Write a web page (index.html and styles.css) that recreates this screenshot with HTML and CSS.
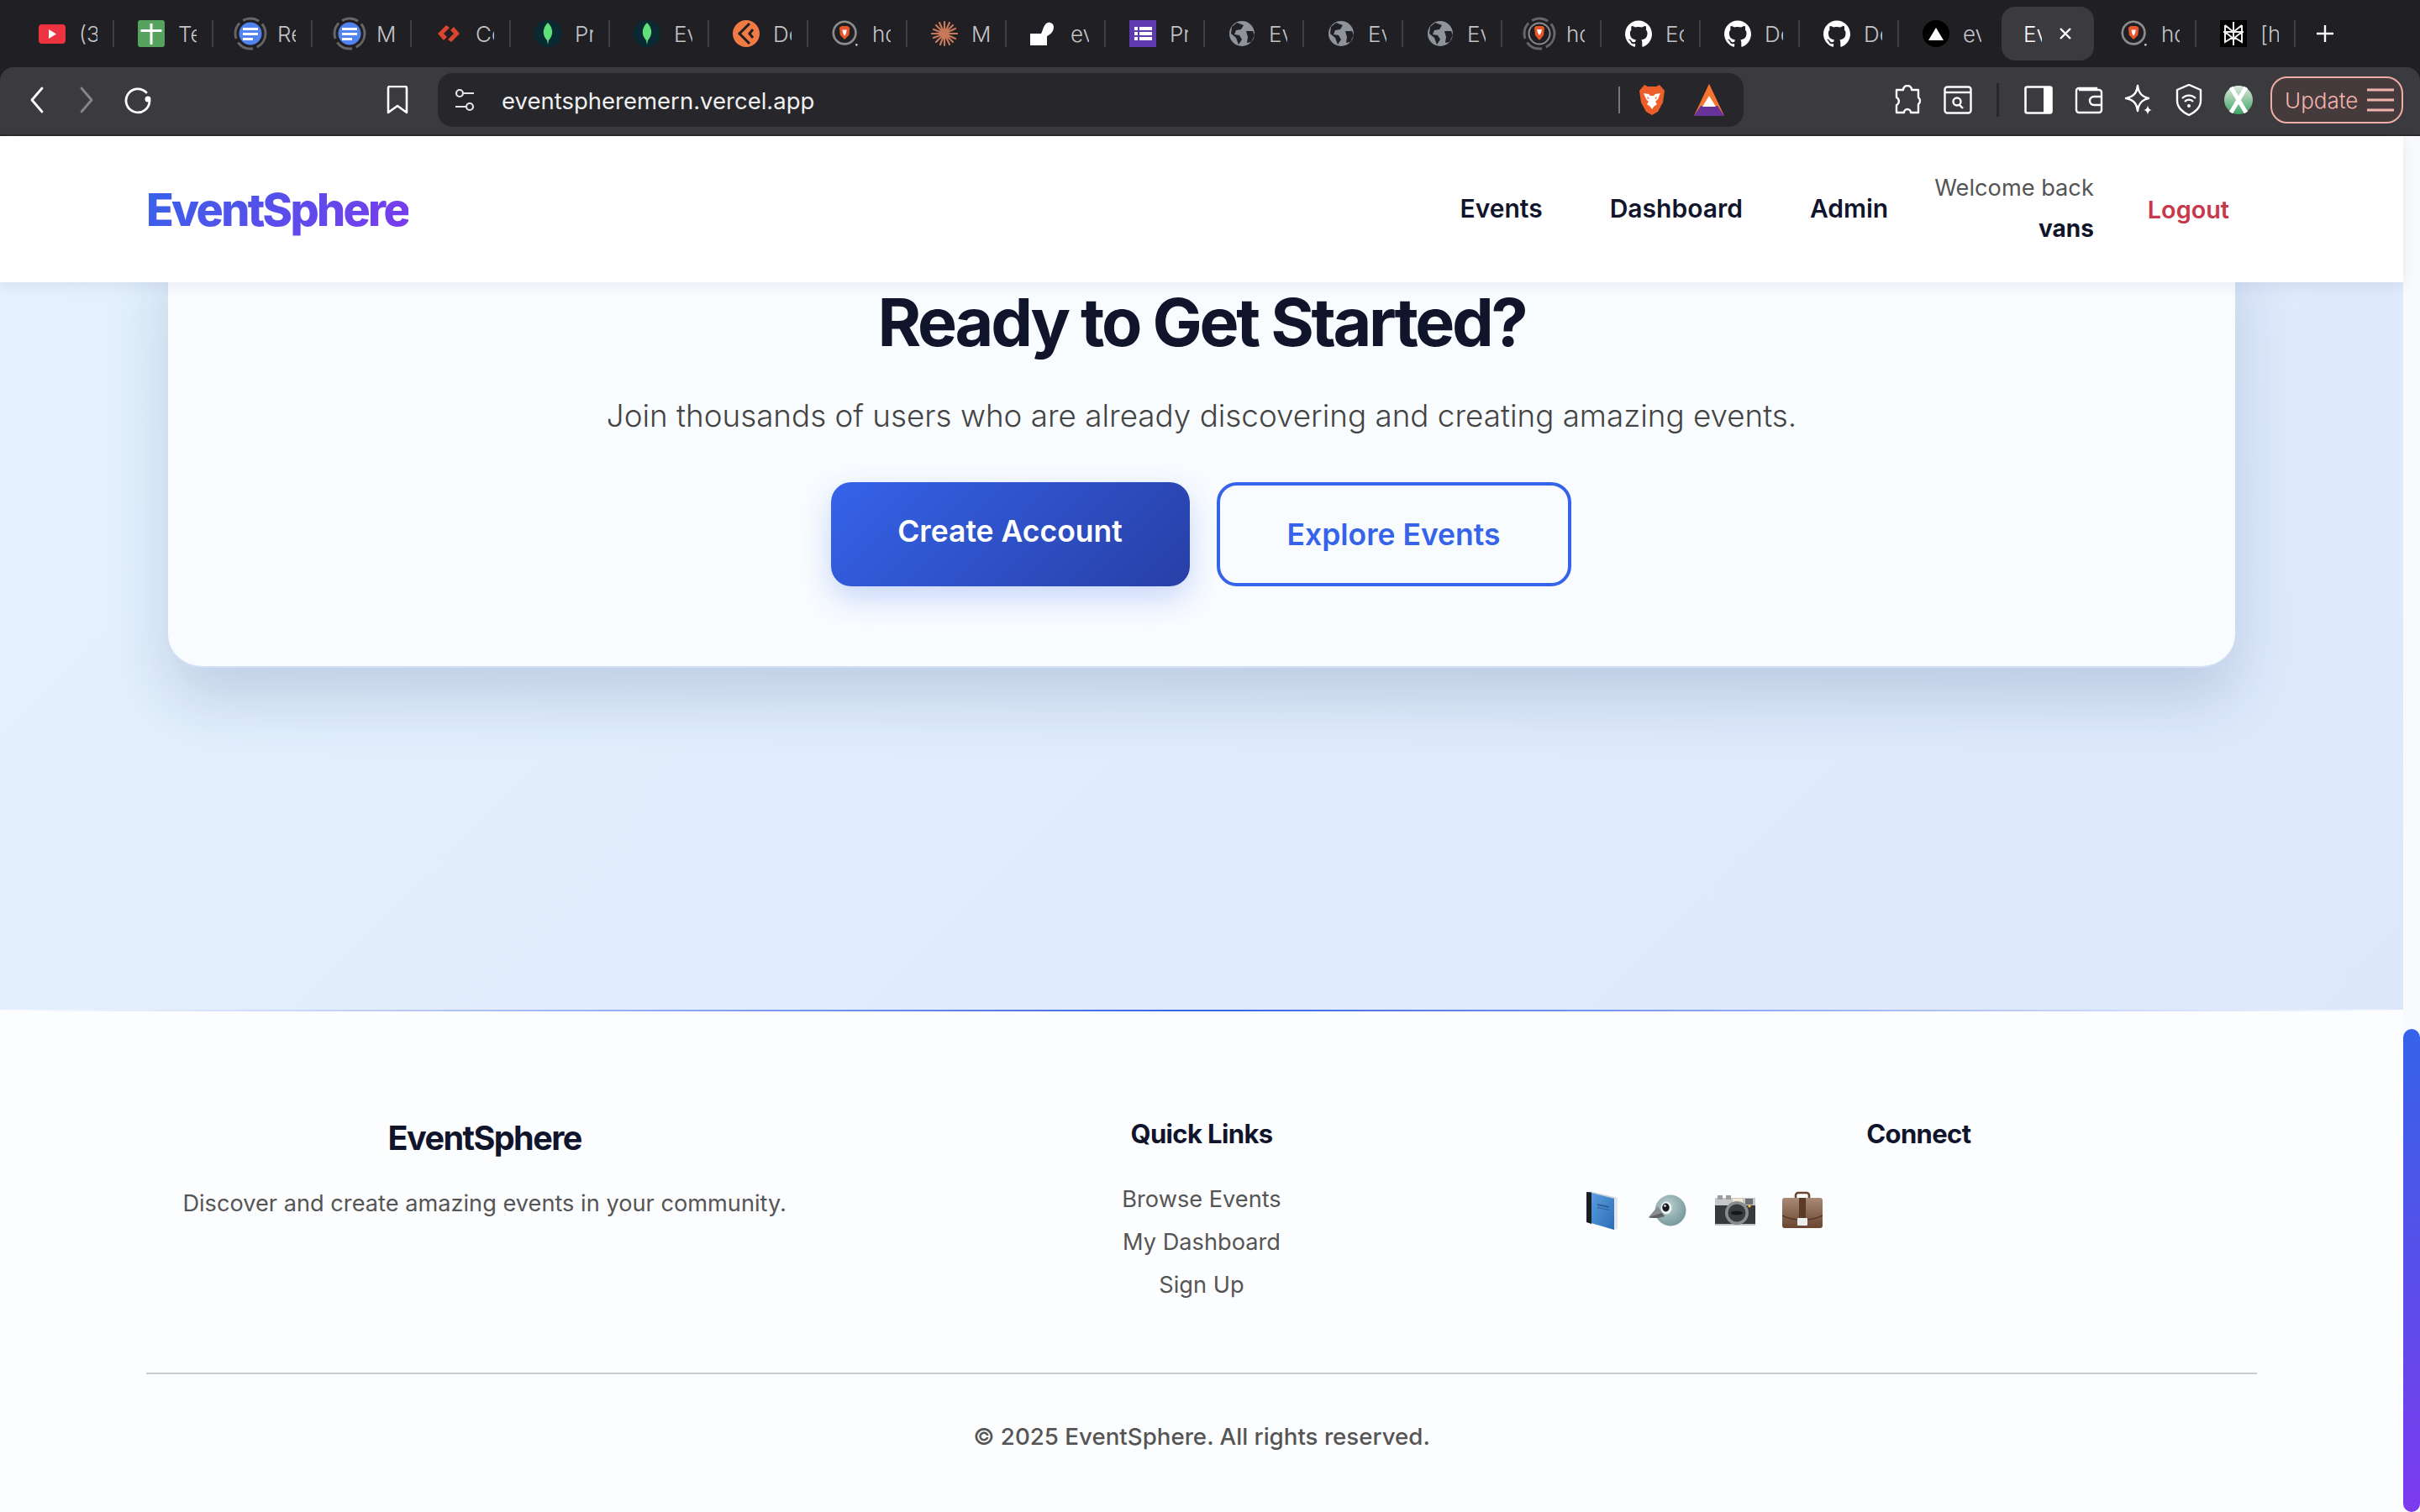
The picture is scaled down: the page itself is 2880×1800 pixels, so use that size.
FILE: index.html
```html
<!DOCTYPE html>
<html lang="en">
<head>
    <meta charset="UTF-8">
    <meta name="viewport" content="width=device-width, initial-scale=1.0">
    <title>EventSphere</title>
    <link rel="stylesheet" href="styles.css">
</head>
<body>
    <svg class="defs" width="0" height="0">
        <defs>
            <symbol id="i-yt" viewBox="0 0 32 32"><rect y="5" width="32" height="23" rx="4" fill="#ee3340"/><path d="M12 11l9 5.500-9 5.500z" fill="#fff"/></symbol>
            <symbol id="i-sheet" viewBox="0 0 32 32"><rect width="32" height="32" rx="3" fill="#55a35f"/><path d="M14.500 4h3v7h11v3h-11v15h-3V14h-11v-3h11z" fill="#fff"/></symbol>
            <symbol id="i-docs" viewBox="0 0 40 40"><circle cx="20" cy="20" r="18" fill="none" stroke="#666" stroke-width="3" stroke-dasharray="20 5"/><circle cx="20" cy="20" r="13.500" fill="#5184ee"/><path d="M11 13h18v3H11zM11 19h18v3H11zM11 25h12v3H11z" fill="#fff"/></symbol>
            <symbol id="i-code" viewBox="0 0 32 32"><path d="M13 6L3 16l7 8 4-4-4-4 7-7zM19 26l10-10-7-8-4 4 4 4-7 7z" fill="#d9452f"/></symbol>
            <symbol id="i-mongo" viewBox="0 0 32 32"><circle cx="16" cy="16" r="16" fill="#0a2a33"/><path d="M16 3c6 6 7.500 14 1 21l-1 5-1-5C8.500 17 10 9 16 3z" fill="#5fe07a"/></symbol>
            <symbol id="i-dz" viewBox="0 0 32 32"><circle cx="16" cy="16" r="16" fill="#f27a45"/><path d="M20 4L8 16l12 12" fill="none" stroke="#1f1f24" stroke-width="3"/><path d="M24 11l-4 5 4 5" fill="none" stroke="#1f1f24" stroke-width="3"/></symbol>
            <symbol id="i-brave" viewBox="0 0 36 36"><circle cx="17" cy="17" r="15" fill="none" stroke="#8c8c8c" stroke-width="3"/><path d="M10 10l3-2h8l3 2-1 10-6 6-6-6z" fill="#e8562a"/><path d="M14 13h6l-1 5-2 3-2-3z" fill="#fff"/><circle cx="33" cy="33" r="1.500" fill="#ccc"/></symbol>
            <symbol id="i-brave-ring" viewBox="0 0 40 40"><circle cx="20" cy="20" r="18" fill="none" stroke="#666" stroke-width="3" stroke-dasharray="20 5"/><circle cx="20" cy="20" r="12.500" fill="none" stroke="#8c8c8c" stroke-width="2"/><path d="M14 13l2-2h8l2 2-1 9-5 6-5-6z" fill="#e8562a"/><path d="M17 15h6l-1 4-2 3-2-3z" fill="#fff"/></symbol>
            <symbol id="i-claude" viewBox="0 0 32 32"><g stroke="#c9795a" stroke-width="2.200" stroke-linecap="round"><path d="M16 16V2M16 16V30M16 16H1M16 16H31M16 16L6 6M16 16L26 6M16 16L6 26M16 16L26 26M16 16L10 3M16 16L22 3M16 16L3 21M16 16L29 10M16 16L11 29M16 16L22 29M16 16L3 11M16 16L29 22"/></g></symbol>
            <symbol id="i-figma" viewBox="0 0 32 32"><path d="M0 16h13c2-3 2-8 6-12 4-3 9 0 9 4 0 6-4 9-8 11v11H0z" fill="#fff"/></symbol>
            <symbol id="i-forms" viewBox="0 0 32 32"><rect width="32" height="32" fill="#5f3bb0"/><path d="M6 8h4v4H6zM12 8h15v4H12zM6 14h4v4H6zM12 14h15v4H12zM6 20h4v4H6zM12 20h15v4H12z" fill="#fff"/></symbol>
            <symbol id="i-globe" viewBox="0 0 32 32"><circle cx="16" cy="16" r="15" fill="#8e9499"/><path d="M10 3l8 3-3 5-6 1-2 5 6 1 3 5-4 6-3-8-6-5 1-8zM21 13l8 0 2 5-4 8-5 1 1-7z" fill="#1f1f24"/></symbol>
            <symbol id="i-gh" viewBox="0 0 32 32"><path d="M16 .500C7.200.500 0 7.700 0 16.500c0 7 4.600 13 11 15.200.8.100 1.100-.3 1.100-.8v-2.800c-4.500 1-5.400-2.100-5.400-2.100-.7-1.800-1.800-2.300-1.800-2.300-1.400-1 .1-1 .1-1 1.600.1 2.500 1.700 2.500 1.700 1.400 2.500 3.800 1.800 4.700 1.300.1-1 .6-1.800 1-2.200-3.600-.4-7.300-1.800-7.300-7.900 0-1.800.6-3.200 1.700-4.300-.2-.4-.7-2 .2-4.300 0 0 1.300-.4 4.400 1.600 1.300-.4 2.700-.5 4-.5s2.700.2 4 .5c3.100-2.100 4.400-1.600 4.400-1.600.9 2.200.3 3.900.2 4.300 1 1.100 1.700 2.500 1.700 4.300 0 6.100-3.700 7.500-7.300 7.900.6.500 1.100 1.500 1.100 3v4.400c0 .4.300.9 1.100.8C27.400 29.500 32 23.500 32 16.500 32 7.700 24.800.500 16 .500z" fill="#fff"/></symbol>
            <symbol id="i-vercel" viewBox="0 0 32 32"><circle cx="16" cy="16" r="16" fill="#000"/><path d="M16 9l9 15H7z" fill="#fff"/></symbol>
            <symbol id="i-pplx" viewBox="0 0 32 32"><rect width="32" height="32" fill="#000"/><path d="M16 2v28M6 6l10 8 10-8M6 6v8h20V6M4 14h24M6 14l10 8 10-8M6 14v12l10-6 10 6V14" fill="none" stroke="#eee" stroke-width="2"/></symbol>
        </defs>
    </svg>

    <div class="tabstrip">
        <div class="tab"><svg class="favicon"><use href="#i-yt"/></svg><span class="tab-title">(3</span></div>
        <div class="tab"><svg class="favicon"><use href="#i-sheet"/></svg><span class="tab-title">Te</span></div>
        <div class="tab"><svg class="favicon ring"><use href="#i-docs"/></svg><span class="tab-title">Re</span></div>
        <div class="tab"><svg class="favicon ring"><use href="#i-docs"/></svg><span class="tab-title">M</span></div>
        <div class="tab"><svg class="favicon"><use href="#i-code"/></svg><span class="tab-title">Cc</span></div>
        <div class="tab"><svg class="favicon"><use href="#i-mongo"/></svg><span class="tab-title">Pr</span></div>
        <div class="tab"><svg class="favicon"><use href="#i-mongo"/></svg><span class="tab-title">Ev</span></div>
        <div class="tab"><svg class="favicon"><use href="#i-dz"/></svg><span class="tab-title">De</span></div>
        <div class="tab"><svg class="favicon"><use href="#i-brave"/></svg><span class="tab-title">ho</span></div>
        <div class="tab"><svg class="favicon"><use href="#i-claude"/></svg><span class="tab-title">M</span></div>
        <div class="tab"><svg class="favicon"><use href="#i-figma"/></svg><span class="tab-title">ev</span></div>
        <div class="tab"><svg class="favicon"><use href="#i-forms"/></svg><span class="tab-title">Pr</span></div>
        <div class="tab"><svg class="favicon"><use href="#i-globe"/></svg><span class="tab-title">Ev</span></div>
        <div class="tab"><svg class="favicon"><use href="#i-globe"/></svg><span class="tab-title">Ev</span></div>
        <div class="tab"><svg class="favicon"><use href="#i-globe"/></svg><span class="tab-title">Ev</span></div>
        <div class="tab"><svg class="favicon ring"><use href="#i-brave-ring"/></svg><span class="tab-title">ho</span></div>
        <div class="tab"><svg class="favicon"><use href="#i-gh"/></svg><span class="tab-title">Ec</span></div>
        <div class="tab"><svg class="favicon"><use href="#i-gh"/></svg><span class="tab-title">De</span></div>
        <div class="tab"><svg class="favicon"><use href="#i-gh"/></svg><span class="tab-title">De</span></div>
        <div class="tab no-sep"><svg class="favicon"><use href="#i-vercel"/></svg><span class="tab-title">ev</span></div>
        <div class="tab active"><span class="tab-title">Ev</span><svg class="tab-close" viewBox="0 0 16 16"><path d="M2 2l12 12M14 2L2 14" stroke="#fff" stroke-width="2.400" fill="none"/></svg></div>
        <div class="tab"><svg class="favicon"><use href="#i-brave"/></svg><span class="tab-title">ho</span></div>
        <div class="tab"><svg class="favicon"><use href="#i-pplx"/></svg><span class="tab-title">[h</span></div>
        <svg class="new-tab" viewBox="0 0 22 22"><path d="M11 1v20M1 11h20" stroke="#fff" stroke-width="2.400"/></svg>
    </div>

    <div class="toolbar">
        <svg class="tool-icon nav-arrow" viewBox="0 0 18 32"><path d="M15 2L3 16l12 14" fill="none" stroke="#fff" stroke-width="2.800" stroke-linecap="round" stroke-linejoin="round"/></svg>
        <svg class="tool-icon nav-arrow forward" viewBox="0 0 18 32"><path d="M3 2l12 14L3 30" fill="none" stroke="#85858a" stroke-width="2.800" stroke-linecap="round" stroke-linejoin="round"/></svg>
        <svg class="tool-icon reload" viewBox="0 0 34 34"><path d="M27 8a14 14 0 1 0 4 10" fill="none" stroke="#fff" stroke-width="2.800" stroke-linecap="round"/><circle cx="29" cy="16" r="3.500" fill="#fff"/></svg>
        <svg class="tool-icon bookmark" viewBox="0 0 26 34"><path d="M2 3a2 2 0 0 1 2-2h18a2 2 0 0 1 2 2v29l-11-8-11 8z" fill="none" stroke="#fff" stroke-width="2.600" stroke-linejoin="round"/></svg>
        <div class="urlbar">
            <svg class="tune" viewBox="0 0 24 32"><circle cx="6" cy="8" r="4" fill="none" stroke="#e4e4e4" stroke-width="2.200"/><path d="M11 8h12M1 24h12" stroke="#e4e4e4" stroke-width="2.200"/><circle cx="18" cy="24" r="4" fill="none" stroke="#e4e4e4" stroke-width="2.200"/></svg>
            <span class="url-text">eventspheremern.vercel.app</span>
            <span class="url-divider"></span>
            <svg class="url-brave" viewBox="0 0 32 38"><path d="M7 1l4 2h10l4-2 6 7-2 14-6 11-7 4-7-4-6-11L1 8z" fill="#ed5f2a"/><path d="M6 11l6 1 2 2h4l2-2 6-1-3 7-3 3 2 3-4 3-2 3-2-3-4-3 2-3-3-3z" fill="#fff"/><path d="M10 15l3 2-2 1zM22 15l-3 2 2 1z" fill="#ed5f2a"/></svg>
            <svg class="url-bat" viewBox="0 0 36 38"><path d="M18 0l18 38H0z" fill="#e3393c"/><path d="M18 0L0 38l10-6h16l10 6z" fill="#f2762e"/><path d="M0 38l8-12h20l8 12z" fill="#66339a"/><path d="M18 14l8 13H10z" fill="#fff"/></svg>
        </div>
        <svg class="tool-icon puzzle" viewBox="0 0 34 36"><path d="M12 6a5 5 0 0 1 10 0h8v9a5 5 0 0 1 0 8v10h-9a4 4 0 0 0-8 0H4v-9a5 5 0 0 0 0-9V6z" fill="none" stroke="#fff" stroke-width="2.400" stroke-linejoin="round"/></svg>
        <svg class="tool-icon shot" viewBox="0 0 34 34"><rect x="1.500" y="1.500" width="31" height="31" rx="3" fill="none" stroke="#fff" stroke-width="2.400"/><path d="M2 8h30" stroke="#fff" stroke-width="2.400"/><circle cx="16" cy="19" r="4.500" fill="none" stroke="#fff" stroke-width="2.400"/><path d="M19 23l4 4" stroke="#fff" stroke-width="2.400"/></svg>
        <span class="tool-divider"></span>
        <svg class="tool-icon sidebar" viewBox="0 0 34 34"><rect x="1.500" y="1.500" width="31" height="31" rx="2" fill="none" stroke="#fff" stroke-width="2.600"/><rect x="23" y="2" width="10" height="30" fill="#fff"/></svg>
        <svg class="tool-icon wallet" viewBox="0 0 34 34"><path d="M26 5V3H5a3 3 0 0 0-3 3v23a3 3 0 0 0 3 3h24a3 3 0 0 0 3-3V8a3 3 0 0 0-3-3H5" fill="none" stroke="#fff" stroke-width="2.400"/><path d="M32 13H23a4 4 0 0 0 0 10h9" fill="none" stroke="#fff" stroke-width="2.400"/></svg>
        <svg class="tool-icon sparkle" viewBox="0 0 36 38"><path d="M17 2c1 9 5 13 13 15-8 2-12 6-13 15-1-9-5-13-14-15 9-2 13-6 14-15z" fill="none" stroke="#fff" stroke-width="2.400" stroke-linejoin="round"/><path d="M29 25c.5 4 2 5.500 5 6-3 .5-4.500 2-5 6-.5-4-2-5.500-5-6 3-.5 4.500-2 5-6z" fill="#fff"/></svg>
        <svg class="tool-icon vpn" viewBox="0 0 32 38"><path d="M16 1l14 6v13c0 8-7 14-14 17C9 34 2 28 2 20V7z" fill="none" stroke="#fff" stroke-width="2.400" stroke-linejoin="round"/><path d="M8 17a11 11 0 0 1 16 0M11 21a6.500 6.500 0 0 1 10 0" fill="none" stroke="#fff" stroke-width="2.200"/><circle cx="16" cy="26" r="2" fill="#fff"/></svg>
        <svg class="tool-icon profile" viewBox="0 0 34 34"><defs><linearGradient id="g-profile" x1="0" y1="0" x2="0" y2="1"><stop offset="0" stop-color="#dfe9df"/><stop offset="1" stop-color="#3fa564"/></linearGradient></defs><circle cx="17" cy="17" r="17" fill="url(#g-profile)"/><path d="M8 2l18 30M26 2L8 32" stroke="#fff" stroke-width="5"/></svg>
        <div class="update-btn">
            <span>Update</span>
            <svg class="update-menu" viewBox="0 0 34 30"><path d="M1 3h32M1 15h32M1 27h32" stroke="#f2b3ad" stroke-width="3"/></svg>
        </div>
    </div>

    <div class="viewport">
        <div class="page">
            <header class="site-nav">
                <div class="logo">EventSphere</div>
                <nav class="nav-links">
                    <a class="nav-link">Events</a>
                    <a class="nav-link">Dashboard</a>
                    <a class="nav-link">Admin</a>
                    <div class="user-box">
                        <span class="welcome">Welcome back</span>
                        <strong class="username">vans</strong>
                    </div>
                    <a class="logout">Logout</a>
                </nav>
            </header>

            <main class="main">
                <section class="cta-card">
                    <h2 class="cta-title">Ready to Get Started?</h2>
                    <p class="cta-text">Join thousands of users who are already discovering and creating amazing events.</p>
                    <div class="cta-buttons">
                        <a class="btn btn-primary"><span class="btn-lift">Create Account</span></a>
                        <a class="btn btn-outline">Explore Events</a>
                    </div>
                </section>
            </main>

            <footer class="footer">
                <div class="footer-grid">
                    <div class="footer-col">
                        <h3 class="footer-brand">EventSphere</h3>
                        <p class="footer-text">Discover and create amazing events in your community.</p>
                    </div>
                    <div class="footer-col">
                        <h4 class="footer-heading">Quick Links</h4>
                        <ul class="footer-list">
                            <li>Browse Events</li>
                            <li>My Dashboard</li>
                            <li>Sign Up</li>
                        </ul>
                    </div>
                    <div class="footer-col">
                        <h4 class="footer-heading">Connect</h4>
                        <div class="social">
                            <svg class="social-icon" viewBox="0 0 48 48"><defs><linearGradient id="g-book" x1="0" y1="0" x2="1" y2="1"><stop offset="0" stop-color="#5a9ee0"/><stop offset="1" stop-color="#2a6db5"/></linearGradient></defs><path d="M7 2l5-.5L44 9v36l-4 2-33-9z" fill="#ccd3da"/><path d="M7 2l6 .5V40l-6-2z" fill="#1a1d24"/><path d="M13 3l27 7v37L13 39z" fill="url(#g-book)"/><path d="M40 10l4-1v36l-4 2z" fill="#e3e6ea"/><path d="M20 16l14 3v2l-14-3zM20 20l14 3v1l-14-3z" fill="#2b5e96"/></svg>
                            <svg class="social-icon" viewBox="0 0 48 48"><defs><radialGradient id="g-bird" cx=".4" cy=".35" r=".75"><stop offset="0" stop-color="#bcd0d0"/><stop offset="1" stop-color="#6f9296"/></radialGradient></defs><circle cx="27" cy="24" r="18.500" fill="url(#g-bird)"/><path d="M12 19L1 32c5 2 13 1 19-1z" fill="#8a8d90"/><path d="M1 32c5 2 13 1 19-1l-3-4z" fill="#5e6164"/><ellipse cx="22" cy="21" rx="6.500" ry="7.500" fill="#eef3f3"/><ellipse cx="21.500" cy="20.500" rx="4.200" ry="5" fill="#16191c"/><circle cx="20.500" cy="18.500" r="1.300" fill="#fff"/></svg>
                            <svg class="social-icon" viewBox="0 0 48 48"><rect x="0" y="9" width="48" height="33" fill="#c4c6c8"/><rect x="0" y="18" width="48" height="22" fill="#38393c"/><rect x="3" y="6" width="6" height="5" fill="#9a9c9f"/><rect x="13" y="6" width="6" height="5" fill="#9a9c9f"/><rect x="21" y="10" width="12" height="5" fill="#f2ead0"/><rect x="36" y="10" width="9" height="7" fill="#6d6f72"/><circle cx="26" cy="27" r="14" fill="#8a8c8f"/><circle cx="26" cy="27" r="10.500" fill="#3a3b3e"/><ellipse cx="26" cy="27" rx="7" ry="2.500" fill="#16171a"/><circle cx="41" cy="19" r="1.600" fill="#f4c430"/></svg>
                            <svg class="social-icon" viewBox="0 0 48 48"><defs><linearGradient id="g-case" x1="0" y1="0" x2="0" y2="1"><stop offset="0" stop-color="#a88a76"/><stop offset="1" stop-color="#6a4530"/></linearGradient></defs><path d="M16 10V6a3 3 0 0 1 3-3h10a3 3 0 0 1 3 3v4" fill="none" stroke="#6a4530" stroke-width="2.600"/><rect x="0" y="9" width="48" height="36" rx="3" fill="url(#g-case)"/><rect x="20" y="9" width="8" height="25" fill="#5a3a28"/><path d="M0 30c14 7 34 7 48 0" fill="none" stroke="#4e3122" stroke-width="1.200"/><rect x="18" y="33" width="12" height="9" rx="1" fill="#eceeee"/></svg>
                        </div>
                    </div>
                </div>
                <div class="footer-bottom">© 2025 EventSphere. All rights reserved.</div>
            </footer>
        </div>
        <div class="scroll-track"><div class="scroll-thumb"></div></div>
    </div>
</body>
</html>
```

FILE: styles.css
```css
* {
    box-sizing: border-box;
}

body {
    margin: 0;
    height: 1800px;
    overflow: hidden;
    display: flex;
    flex-direction: column;
    background-color: #1f1f24;
    font-family: Inter, "Noto Sans", sans-serif;
}

.defs {
    position: absolute;
}

/* browser tabs */
.tabstrip {
    height: 80px;
    padding-left: 18px;
    display: flex;
    align-items: center;
    flex-shrink: 0;
}

.tab {
    width: 118px;
    height: 32px;
    padding-left: 28px;
    display: flex;
    align-items: center;
    border-right: 2px solid #3e3e43;
    flex-shrink: 0;
}

.tab.no-sep {
    border-right-color: transparent;
}

.favicon {
    width: 32px;
    height: 32px;
    flex-shrink: 0;
}

.favicon.ring {
    width: 40px;
    height: 40px;
    margin-left: -4px;
    margin-right: -4px;
}

.tab-title {
    width: 22px;
    margin-left: 16px;
    overflow: hidden;
    white-space: nowrap;
    font-size: 26px;
    font-weight: 300;
    color: #c4c4c6;
}

.tab.active {
    height: 64px;
    width: 110px;
    margin-left: 4px;
    margin-right: 4px;
    padding-left: 26px;
    border-right: none;
    border-radius: 16px;
    background-color: #3a3a3f;
}

.tab.active .tab-title {
    margin-left: 0;
    color: #fff;
}

.tab-close {
    width: 16px;
    height: 16px;
    margin-left: 20px;
}

.new-tab {
    width: 22px;
    height: 22px;
    margin-left: 24px;
}

/* browser toolbar */
.toolbar {
    height: 82px;
    padding-bottom: 2px;
    display: flex;
    align-items: center;
    flex-shrink: 0;
    border-radius: 16px 16px 0 0;
    border-bottom: 2px solid #2b2b2f;
    background-color: #3a3a3f;
}

.tool-icon {
    flex-shrink: 0;
}

.nav-arrow {
    width: 18px;
    height: 32px;
    margin-left: 35px;
}

.nav-arrow.forward {
    margin-left: 41px;
}

.reload {
    width: 34px;
    height: 34px;
    margin-left: 35px;
}

.bookmark {
    width: 26px;
    height: 34px;
    margin-left: 279px;
}

.urlbar {
    width: 1554px;
    height: 64px;
    margin-left: 35px;
    padding-left: 20px;
    display: flex;
    align-items: center;
    border-radius: 18px;
    background-color: #26262b;
}

.tune {
    width: 24px;
    height: 32px;
}

.url-text {
    margin-left: 32px;
    padding-top: 1px;
    font-size: 27.500px;
    color: #f0f0f0;
    width: 1329px;
}

.url-divider {
    width: 2px;
    height: 32px;
    background-color: #77777b;
}

.url-brave {
    width: 32px;
    height: 38px;
    margin-left: 22px;
}

.url-bat {
    width: 36px;
    height: 38px;
    margin-left: 34px;
}

.puzzle {
    width: 34px;
    height: 36px;
    margin-left: 178px;
}

.shot {
    width: 34px;
    height: 34px;
    margin-left: 26px;
}

.tool-divider {
    width: 3px;
    height: 40px;
    margin-left: 29px;
    background-color: #26262b;
}

.sidebar {
    width: 34px;
    height: 34px;
    margin-left: 30px;
}

.wallet {
    width: 34px;
    height: 34px;
    margin-left: 26px;
}

.sparkle {
    width: 36px;
    height: 38px;
    margin-left: 24px;
}

.vpn {
    width: 32px;
    height: 38px;
    margin-left: 26px;
}

.profile {
    width: 34px;
    height: 34px;
    margin-left: 26px;
}

.update-btn {
    width: 158px;
    height: 56px;
    margin-left: 21px;
    padding-left: 15px;
    display: flex;
    align-items: center;
    gap: 10px;
    border: 2px solid #f0aca6;
    border-radius: 20px;
    background-color: #453a3c;
    color: #f2b3ad;
    font-size: 26px;
    font-weight: 300;
}

.update-menu {
    width: 34px;
    height: 30px;
}

/* site */
.viewport {
    flex: 1;
    min-height: 0;
    display: flex;
}

.page {
    width: 2860px;
    display: flex;
    flex-direction: column;
    background-color: #fcfdff;
}

.site-nav {
    height: 174px;
    padding: 0 207px 0 174px;
    position: relative;
    z-index: 2;
    display: flex;
    align-items: center;
    justify-content: space-between;
    flex-shrink: 0;
    background-color: #fff;
    box-shadow: 0 4px 16px rgba(20, 30, 60, 0.08);
}

.logo {
    font-size: 53.800px;
    font-weight: 800;
    letter-spacing: -0.05em;
    background: linear-gradient(135deg, #3563e9, #7c3aed);
    -webkit-background-clip: text;
    background-clip: text;
    color: transparent;
}

.nav-links {
    display: flex;
    align-items: center;
}

.nav-link {
    margin-right: 80px;
    margin-bottom: 2px;
    font-size: 30px;
    font-weight: 600;
    color: #11152b;
}

.nav-link:nth-child(3) {
    margin-right: 55px;
}

.user-box {
    display: flex;
    flex-direction: column;
    align-items: flex-end;
    gap: 14px;
    line-height: 35px;
    margin-bottom: 2px;
    font-size: 28px;
}

.welcome {
    font-size: 27.200px;
    font-weight: 400;
    color: #555;
}

.username {
    font-weight: 700;
    color: #11152b;
}

.logout {
    margin-left: 64px;
    font-size: 28.800px;
    font-weight: 600;
    color: #c9374a;
}

.main {
    height: 866px;
    padding: 0 200px;
    overflow: hidden;
    flex-shrink: 0;
    background: linear-gradient(135deg, #e4f1fd, #dde8fb);
}

.cta-card {
    margin-top: -60px;
    height: 519px;
    padding-top: 59px;
    text-align: center;
    border-radius: 40px;
    border-bottom: 2px solid #d3dff8;
    background-color: #f9fcff;
    box-shadow: 0 36px 72px rgba(30, 60, 110, 0.18);
}

.cta-title {
    margin: 0;
    font-size: 79px;
    line-height: 96px;
    font-weight: 700;
    letter-spacing: -0.042em;
    color: #11152b;
}

.cta-text {
    margin: 32px 0 0;
    font-size: 36.800px;
    line-height: 64px;
    font-weight: 300;
    color: #444;
}

.cta-buttons {
    margin-top: 47px;
    display: flex;
    justify-content: center;
    gap: 32px;
}

.btn {
    width: 424px;
    height: 124px;
    display: flex;
    align-items: center;
    justify-content: center;
    border-radius: 24px;
    font-size: 35.500px;
    font-weight: 600;
}

.btn-primary {
    width: 427px;
    margin-left: -2px;
    color: #fff;
    background: linear-gradient(135deg, #3563e9, #283fa6);
    box-shadow: 0 14px 36px rgba(53, 99, 233, 0.25);
}

.btn-lift {
    margin-bottom: 7px;
}

.btn-outline {
    width: 422px;
    color: #3563e9;
    border: 4px solid #3563e9;
}

.footer {
    flex: 1;
    padding: 0 174px;
    position: relative;
    display: flex;
    flex-direction: column;
    background-color: #fcfdff;
    border-top: 2px solid transparent;
    border-image: linear-gradient(90deg, transparent, #3563e9 50%, transparent) 1;
}

.footer-grid {
    margin-top: 120px;
    height: 312px;
    display: grid;
    grid-template-columns: repeat(3, 1fr);
    gap: 48px;
    border-bottom: 2px solid #c9cbcf;
}

.footer-col {
    text-align: center;
}

.footer-brand {
    margin: 7px 0 0;
    font-size: 39.600px;
    line-height: 48px;
    font-weight: 700;
    letter-spacing: -0.04em;
    color: #11152b;
}

.footer-text {
    margin: 31px 0 0;
    font-size: 27.200px;
    line-height: 46px;
    color: #555;
}

.footer-heading {
    margin: 2px 0 0;
    font-size: 31px;
    line-height: 48px;
    font-weight: 700;
    letter-spacing: -0.02em;
    color: #11152b;
}

.footer-list {
    margin: 28px 0 0;
    padding: 0;
    list-style: none;
    font-size: 27.200px;
    line-height: 51px;
    color: #555;
}

.social {
    margin-top: 43px;
    display: flex;
    gap: 32px;
}

.social-icon {
    width: 48px;
    height: 48px;
}

.footer-bottom {
    margin-top: 54px;
    text-align: center;
    font-size: 27.700px;
    line-height: 40px;
    font-weight: 500;
    color: #555;
}

/* scrollbar */
.scroll-track {
    width: 20px;
    padding-top: 1063px;
    background-color: #f9fafc;
}

.scroll-thumb {
    height: 575px;
    border-radius: 10px;
    background: linear-gradient(180deg, #3563e9, #7c3aed);
}
```
